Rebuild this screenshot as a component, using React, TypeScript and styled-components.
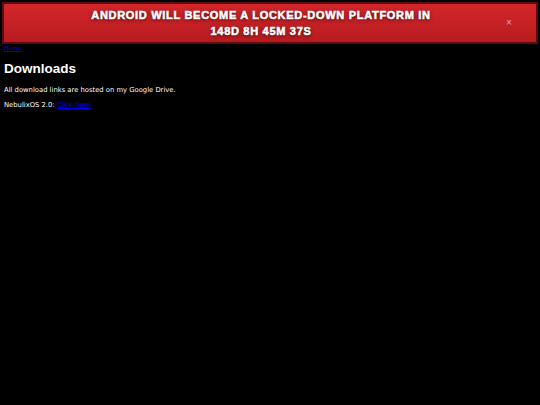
import React, { useState } from "react";
import styled, { createGlobalStyle } from "styled-components";

const GlobalStyle = createGlobalStyle`
  html, body {
    margin: 0;
    padding: 0;
    background: #000000;
  }
  body {
    font-family: "Liberation Serif", serif;
  }
`;

function App() {
  const [showBanner, setShowBanner] = useState(true);

  return (
    <Page>
      <GlobalStyle />
      {showBanner && (
        <Banner>
          <BannerText>
            ANDROID WILL BECOME A LOCKED-DOWN PLATFORM IN
            <br />
            148D 8H 45M 37S
          </BannerText>
          <CloseBtn onClick={() => setShowBanner(false)}>×</CloseBtn>
        </Banner>
      )}
      <HomeLink href="#">Home</HomeLink>
      <Content>
        <Title>Downloads</Title>
        <Text>All download links are hosted on my Google Drive.</Text>
        <Text $gap={6}>
          NebulixOS 2.0: <TextLink href="#">Click here</TextLink>
        </Text>
      </Content>
    </Page>
  );
}

const Page = styled.div`
  width: 540px;
  min-height: 405px;
  background: #000000;
  display: flex;
  flex-direction: column;
`;

const Banner = styled.div`
  margin: 2px 2px 0;
  height: 38px;
  padding-left: 14px;
  display: flex;
  align-items: center;
  background: linear-gradient(180deg, #d3262b 0%, #b81c20 100%);
  border: 2px solid #5c0c0e;
  box-shadow: 0 1px 4px rgba(0, 0, 0, 0.6);
`;

const BannerText = styled.div`
  flex: 1;
  font-family: "Liberation Sans", Arial, sans-serif;
  font-weight: 700;
  font-size: 11px;
  line-height: 16px;
  letter-spacing: 0.7px;
  color: #ffffff;
  text-align: center;
  -webkit-text-stroke: 0.5px #ffffff;
  text-shadow: 0 1px 4px rgba(0, 0, 0, 0.7), 0 1px 1px rgba(0, 0, 0, 0.4);
`;

const CloseBtn = styled.span`
  width: 10px;
  margin-right: 22px;
  text-align: center;
  font-family: "Liberation Sans", Arial, sans-serif;
  font-size: 10px;
  line-height: 10px;
  color: #f0a0a4;
  cursor: pointer;
`;

const HomeLink = styled.a`
  margin-left: 4px;
  font-family: "Liberation Serif", serif;
  font-size: 7px;
  line-height: 8px;
  color: #0000ee;
`;

const Content = styled.div`
  padding: 0 4px;
  display: flex;
  flex-direction: column;
`;

const Title = styled.h1`
  margin: 8px 0 0;
  font-family: "Liberation Sans", Arial, sans-serif;
  font-weight: 700;
  font-size: 13.5px;
  line-height: 18px;
  color: #ffffff;
`;

const Text = styled.p<{ $gap?: number }>`
  margin: ${(p) => p.$gap ?? 8}px 0 0;
  font-family: "DejaVu Sans", sans-serif;
  font-size: 6.8px;
  line-height: 9px;
  color: #ffffff;
`;

const TextLink = styled.a`
  color: #0000ee;
`;

export default App;
